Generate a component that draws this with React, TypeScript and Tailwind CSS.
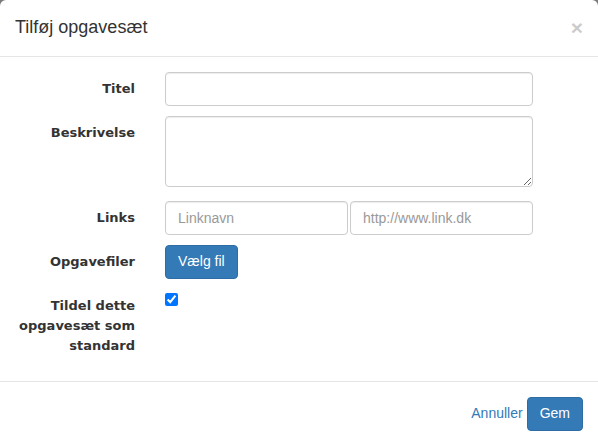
import { useState } from 'react';

const sans = { fontFamily: '"Liberation Sans", Arial, sans-serif' };
const label = { fontFamily: '"DejaVu Sans", Verdana, sans-serif' };

function Row({ title, children, className = '' }: { title: string; children: React.ReactNode; className?: string }) {
  return (
    <div className={`flex ${className}`}>
      <label
        style={label}
        className="w-[150px] shrink-0 pr-[15px] pt-[7px] text-right text-[13px] font-bold leading-[20px] text-[#333]"
      >
        {title}
      </label>
      <div className="w-[398px] px-[15px]">{children}</div>
    </div>
  );
}

const input =
  'block h-[34px] w-full rounded-[4px] border border-[#ccc] bg-white px-[12px] text-[14px] text-[#555] shadow-[inset_0_1px_1px_rgba(0,0,0,0.075)] outline-none placeholder:text-[#999]';

export default function App() {
  const [standard, setStandard] = useState(true);

  return (
    <div className="h-[435px] w-[598px] overflow-hidden bg-[#7a7a7a]" style={sans}>
      <div className="rounded-t-[6px] bg-white">
        <header className="flex items-start justify-between border-b border-[#e5e5e5] p-[15px]">
          <h4 className="text-[18px] leading-[25.7px] text-[#333]">Tilføj opgavesæt</h4>
          <button className="mt-[2px] text-[21px] font-bold leading-none text-black opacity-20">×</button>
        </header>

        <form className="flex flex-col gap-[10px] pt-[15px] pb-[25px]">
          <Row title="Titel">
            <input className={input} />
          </Row>
          <Row title="Beskrivelse" className="mb-[4px]">
            <textarea className={`${input} h-[71px] py-[6px]`} />
          </Row>
          <Row title="Links">
            <div className="grid grid-cols-2 gap-[2px]">
              <input className={input} placeholder="Linknavn" />
              <input className={input} placeholder="http://www.link.dk" />
            </div>
          </Row>
          <Row title="Opgavefiler">
            <button
              type="button"
              className="h-[34px] rounded-[4px] border border-[#2e6da4] bg-[#337ab7] px-[12px] text-[14px] text-white"
            >
              Vælg fil
            </button>
          </Row>
          <Row title="Tildel dette opgavesæt som standard">
            <input
              type="checkbox"
              checked={standard}
              onChange={(e) => setStandard(e.target.checked)}
              className="mt-[4px] h-[13px] w-[13px]"
            />
          </Row>
        </form>

        <footer className="flex items-center justify-end gap-[4px] border-t border-[#e5e5e5] p-[15px]">
          <a href="#" className="text-[14px] text-[#337ab7]">
            Annuller
          </a>
          <button className="h-[34px] rounded-[4px] border border-[#2e6da4] bg-[#337ab7] px-[12px] text-[14px] text-white">
            Gem
          </button>
        </footer>
      </div>
    </div>
  );
}
